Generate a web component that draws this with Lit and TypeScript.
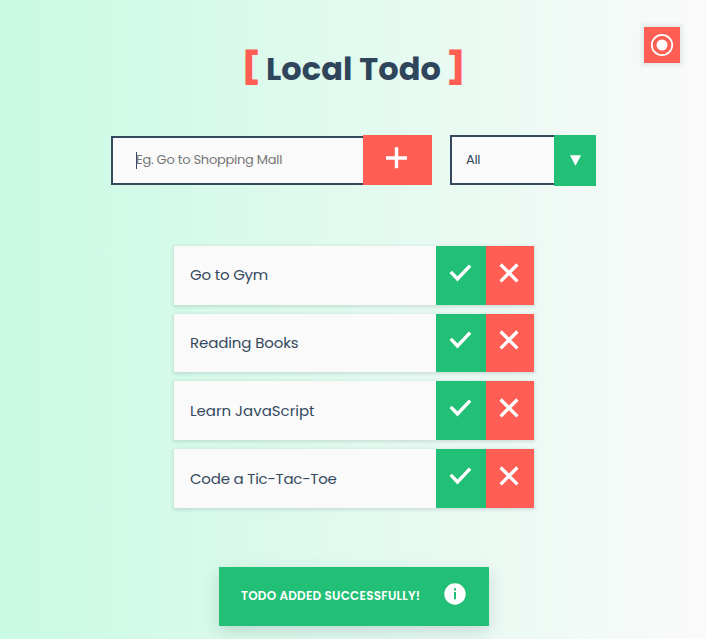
import { LitElement, html, css, svg } from "lit";
import { customElement, state } from "lit/decorators.js";

const check = html`<svg class="icon check" width="24" height="24" viewBox="0 0 24 24">${svg`<path d="M2.7 10.8 L9.5 18 L22.1 4.6" fill="none" stroke="#fff" stroke-width="3.4"/>`}</svg>`;
const cross = html`<svg class="icon cross" width="24" height="24" viewBox="0 0 24 24">${svg`<path d="M3.6 3.5 L20.4 20.3 M20.4 3.5 L3.6 20.3" fill="none" stroke="#fff" stroke-width="3.3"/>`}</svg>`;

@customElement("app-root")
export class AppRoot extends LitElement {
  @state() private todos = [
    { text: "Go to Gym", cls: "gym" },
    { text: "Reading Books", cls: "books" },
    { text: "Learn JavaScript", cls: "learn" },
    { text: "Code a Tic-Tac-Toe", cls: "code" },
  ];

  static styles = css`
    :host {
      display: block;
      position: relative;
      height: 639px;
      overflow: hidden;
      box-sizing: border-box;
      font-family: Poppins, Inter, sans-serif;
      color: #34495e;
      background: linear-gradient(to right, #c9fae3, #fafafa);
    }
    * { box-sizing: border-box; }
    button { border: 0; padding: 0; margin: 0; font: inherit; color: #fff; display: flex; align-items: center; justify-content: center; }
    .icon { display: block; flex: none; }
    .theme {
      position: absolute; top: 27px; right: 27px; width: 36px; height: 36px;
      background: #ff5e54; box-shadow: 0 0 3px 3px rgba(52, 73, 94, 0.08);
    }
    h1 {
      margin: 0; padding-top: 45px; height: 135px;
      display: flex; justify-content: center; align-items: flex-start;
      font-size: 32px; line-height: 48px; font-weight: 700; color: #2f455c; white-space: nowrap;
    }
    .title { width: 176px; margin: 0 7px 0 8px; letter-spacing: 0.06px; }
    .bracket { color: #ff5e54; width: 14px; line-height: 44px; font-weight: 900; display: flex; justify-content: center; }
    .form { display: flex; height: 51px; padding-left: 111px; align-items: flex-start; font-size: 13px; }
    .field { width: 252px; height: 49px; margin-top: 1px; border: 2px solid #34495e; border-right: 0; background: #fafafa; display: flex; align-items: center; padding-left: 23px; color: #757575; white-space: nowrap; }
    .caret { width: 1px; height: 17px; background: #34495e; margin-right: -1px; }
    .placeholder { letter-spacing: -0.26px; padding-bottom: 1px; }
    .add { width: 69px; height: 50px; background: #ff5e54; padding: 0 2px 4px 0; }
    .select { display: flex; margin-left: 18px; }
    .value { width: 104px; height: 50px; border: 2px solid #34495e; border-right: 0; background: #fafafa; padding-left: 14px; line-height: 45px; letter-spacing: -0.3px; }
    .arrow { width: 42px; height: 51px; background: #22bf76; display: flex; align-items: center; justify-content: center; }
    ul { list-style: none; margin: 60px 0 0 174px; padding: 0; width: 360px; display: flex; flex-direction: column; gap: 9px; }
    li { display: flex; height: 58.67px; background: #fafafa; box-shadow: 0 1px 3px 1px rgba(52, 73, 94, 0.15); }
    .text { flex: 1; padding-left: 16px; font-size: 15px; line-height: 58.67px; white-space: nowrap; }
    .gym { letter-spacing: -0.2px; }
    .books { letter-spacing: -0.12px; }
    .learn, .code { padding-top: 0.6px; }
    .code { letter-spacing: -0.22px; }
    .done { width: 49.5px; background: #22bf76; padding: 0 1px 5px 0; }
    .del { width: 48.5px; background: #ff5e54; padding: 0 1px 5px 0; }
    .toast {
      width: 270px; height: 59px; margin: 59.3px 0 0 219px; padding-left: 22px; display: flex; align-items: center;
      background: #22bf76; color: #fff; font-size: 12px; font-weight: 600; white-space: nowrap;
      box-shadow: 0 5px 15px rgba(52, 73, 94, 0.18);
    }
    .message { width: 203px; letter-spacing: 0.24px; }
    .info { margin-bottom: 5px; }
  `;

  render() {
    return html`
      <button class="theme" aria-label="Theme">
        <svg class="icon" width="24" height="24" viewBox="0 0 24 24">
          <circle cx="12" cy="12" r="10.2" fill="none" stroke="#fff" stroke-width="1.8" />
          <circle cx="12" cy="12" r="5.5" fill="#fff" />
        </svg>
      </button>
      <h1><span class="bracket">[</span><span class="title">Local Todo</span><span class="bracket">]</span></h1>
      <div class="form">
        <div class="field"><span class="caret"></span><span class="placeholder">Eg. Go to Shopping Mall</span></div>
        <button class="add" aria-label="Add">
          <svg class="icon" width="22" height="22" viewBox="0 0 22 22"><path d="M10.5 0.3V21.3M0 11H21" stroke="#fff" stroke-width="3.4" /></svg>
        </button>
        <div class="select">
          <div class="value">All</div>
          <div class="arrow"><svg class="icon" width="11" height="11" viewBox="0 0 11 11"><path d="M0 0.2H11L5.5 10.7Z" fill="#fff" /></svg></div>
        </div>
      </div>
      <ul>
        ${this.todos.map((t) => html`<li>
          <span class="text ${t.cls}">${t.text}</span>
          <button class="done" aria-label="Complete">${check}</button>
          <button class="del" aria-label="Delete">${cross}</button>
        </li>`)}
      </ul>
      <div class="toast">
        <span class="message">TODO ADDED SUCCESSFULLY!</span>
        <svg class="icon info" width="22" height="22" viewBox="0 0 22 22">
          <circle cx="11" cy="11" r="10.7" fill="#fff" />
          <path d="M10 5.2H12V7.4H10ZM10 9H12V16.2H10Z" fill="#22bf76" />
        </svg>
      </div>
    `;
  }
}
